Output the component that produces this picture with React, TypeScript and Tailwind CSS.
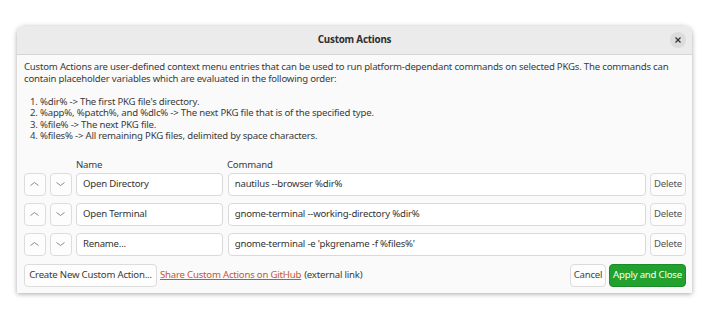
import React from 'react';

const rows = [
  { name: 'Open Directory', command: 'nautilus --browser %dir%' },
  { name: 'Open Terminal', command: 'gnome-terminal --working-directory %dir%' },
  { name: 'Rename...', command: "gnome-terminal -e 'pkgrename -f %files%'" },
];

const Chevron: React.FC<{ up?: boolean }> = ({ up }) => (
  <svg width="9" height="6" viewBox="0 0 9 6" fill="none" stroke="#8a8a8a" strokeWidth="1">
    {up ? <polyline points="0.5,4.5 4.5,1.5 8.5,4.5" /> : <polyline points="0.5,1.5 4.5,4.5 8.5,1.5" />}
  </svg>
);

const btn = 'h-[23px] flex items-center justify-center whitespace-nowrap rounded-[4px] border border-[#dcdcdc] bg-[#fdfdfd] text-[#3a3a3a]';
const field = 'h-[23px] flex items-center whitespace-nowrap rounded-[4px] border border-[#d9d9d9] bg-white px-[6px] text-[#333]';

export default function App() {
  return (
    <div
      className="w-[710px] h-[317px] bg-white pt-[26px] pl-[17px] text-[9.6px] tracking-[-0.2px] text-[#3b3b3b]"
      style={{ fontFamily: '"Noto Sans", "Open Sans", sans-serif' }}
    >
      <div className="w-[675px] h-[267px] flex flex-col rounded-t-[8px] bg-[#fafafa] shadow-[0_1px_5px_rgba(0,0,0,0.35)] overflow-hidden">
        <div className="h-[29px] shrink-0 relative flex items-center justify-center bg-[#ebebeb] border-b border-[#d5d5d5]">
          <span className="font-bold text-[9.8px] text-[#2e2e2e]">Custom Actions</span>
          <div className="absolute right-[6px] top-[6px] w-[16px] h-[16px] rounded-full bg-[#dcdcdc] flex items-center justify-center">
            <svg width="6" height="6" viewBox="0 0 6 6" stroke="#333" strokeWidth="1.2">
              <line x1="0.5" y1="0.5" x2="5.5" y2="5.5" />
              <line x1="5.5" y1="0.5" x2="0.5" y2="5.5" />
            </svg>
          </div>
        </div>

        <div className="flex-1 flex flex-col pl-[7px] pr-[6px] pt-[6px]">
          <div className="leading-[11.5px] whitespace-nowrap">
            <p>
              Custom Actions are user-defined context menu entries that can be used to run platform-dependant commands on selected PKGs. The commands can
              <br />
              contain placeholder variables which are evaluated in the following order:
            </p>
            <ol className="mt-[11.5px] pl-[6px]">
              <li>1. %dir% -&gt; The first PKG file's directory.</li>
              <li>2. %app%, %patch%, and %dlc% -&gt; The next PKG file that is of the specified type.</li>
              <li>3. %file% -&gt; The next PKG file.</li>
              <li>4. %files% -&gt; All remaining PKG files, delimited by space characters.</li>
            </ol>
          </div>

          <div className="mt-[17px] flex h-[13px] items-center">
            <span className="ml-[52px] w-[151px]">Name</span>
            <span>Command</span>
          </div>

          <div className="mt-[1px] flex flex-col gap-[7px]">
            {rows.map(row => (
              <div key={row.name} className="flex gap-[4px]">
                <div className={`${btn} w-[22px]`}><Chevron up /></div>
                <div className={`${btn} w-[22px]`}><Chevron /></div>
                <div className={`${field} w-[147px]`}>{row.name}</div>
                <div className={`${field} w-[419px] ml-[1px]`}>{row.command}</div>
                <div className={`${btn} w-[36px] text-[#555]`}>Delete</div>
              </div>
            ))}
          </div>

          <div className="mt-[8px] flex items-center whitespace-nowrap">
            <div className={`${btn} w-[133px]`}>Create New Custom Action...</div>
            <a className="ml-[3px] text-[#c4572f] underline underline-offset-[1px]">Share Custom Actions on GitHub</a>
            <span className="ml-[3px]">(external link)</span>
            <div className="ml-auto flex gap-[3px]">
              <div className={`${btn} w-[36px] text-[#444]`}>Cancel</div>
              <div className="h-[23px] w-[77px] flex items-center justify-center rounded-[4px] border border-[#1c8c28] bg-[#22a12f] text-white">
                Apply and Close
              </div>
            </div>
          </div>
        </div>
      </div>
    </div>
  );
}
